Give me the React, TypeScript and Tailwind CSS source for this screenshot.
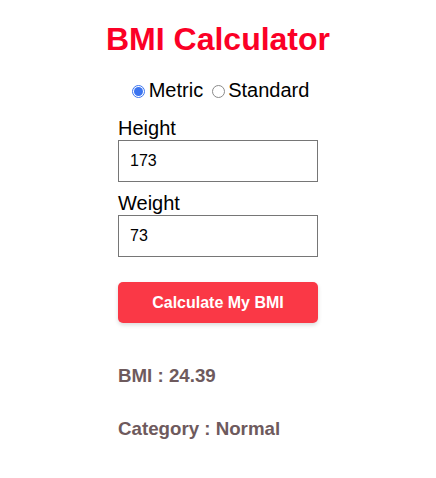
import React from "react";

export default function App() {
  return (
    <div className="w-[436px] h-[478px] bg-white flex flex-col items-center" style={{ fontFamily: '"Liberation Sans", Arial, sans-serif' }}>
      <h1 className="mt-[21px] text-[32px] leading-[37px] font-bold text-[#fb0026]">BMI Calculator</h1>
      <div className="mt-[21px] flex items-center text-[20px] leading-[23px] text-black">
        <span className="ml-[5px] mr-[4px] mt-[2px] w-[13px] h-[13px] rounded-full border border-[#3b74f0] flex items-center justify-center">
          <span className="w-[9px] h-[9px] rounded-full bg-[#3b74f0]" />
        </span>
        <span>Metric</span>
        <span className="ml-[9px] mr-[3px] mt-[2px] w-[13px] h-[13px] rounded-full border border-[#8a8a8a] bg-white" />
        <span>Standard</span>
      </div>
      <div className="mt-[15px] w-[200px] flex flex-col text-black">
        <div className="text-[20px] leading-[23px]">Height</div>
        <div className="h-[42px] border border-[#767676] flex items-center pl-[11px] text-[16px]">173</div>
        <div className="mt-[10px] text-[20px] leading-[23px]">Weight</div>
        <div className="h-[42px] border border-[#767676] flex items-center pl-[11px] text-[16px]">73</div>
        <div className="mt-[25px] h-[41px] rounded-[5px] bg-[#fa3846] shadow-[0_2px_4px_rgba(0,0,0,0.15)] flex items-center justify-center text-white font-bold text-[16px]">Calculate My BMI</div>
        <div className="mt-[42px] text-[18.72px] leading-[21.5px] font-bold text-[#6e5a5d]">BMI : 24.39</div>
        <div className="mt-[31.5px] text-[18.72px] leading-[21.5px] font-bold text-[#6e5a5d]">Category : Normal</div>
      </div>
    </div>
  );
}
